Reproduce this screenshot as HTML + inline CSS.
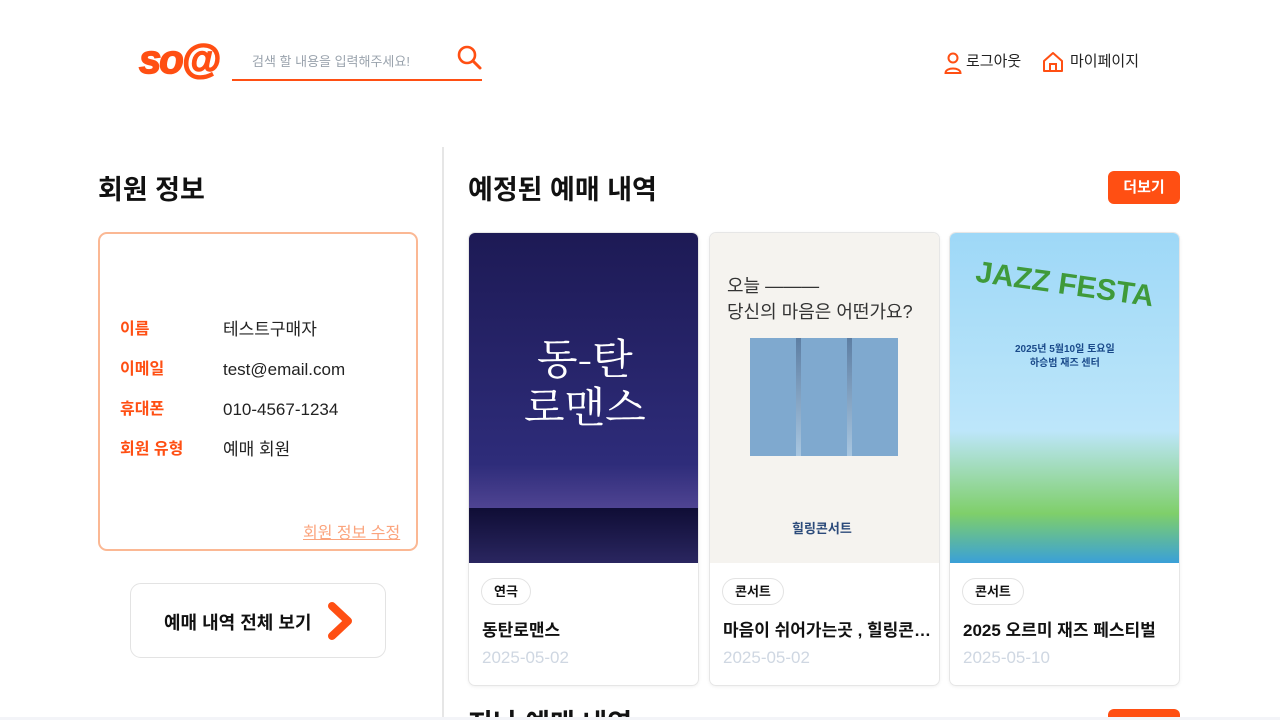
<!DOCTYPE html>
<html><head><meta charset="utf-8"><style>
*{margin:0;padding:0;box-sizing:border-box}
html,body{width:1280px;height:720px;overflow:hidden}
body{background:#fff;font-family:"Liberation Sans","Noto Sans CJK KR",sans-serif;color:#111;position:relative}
.a{position:absolute}
.logo{left:139px;top:36px;font-size:40px;font-weight:900;font-style:italic;color:#ff4f13;letter-spacing:-2px;line-height:48px;-webkit-text-stroke:1.5px #ff4f13}
.search{left:232px;top:40px;width:250px;height:41px;border-bottom:2px solid #ff4f13}
.search span{position:absolute;left:20px;top:11px;font-size:13px;color:#9aa3ad}
.nav{top:52px;font-size:15px;color:#222;line-height:20px}
h2{position:absolute;font-size:27px;font-weight:bold;line-height:32px}
.box{left:98px;top:232px;width:320px;height:319px;border:2px solid #fbb894;border-radius:9px}
.lab{left:120px;font-size:16px;font-weight:bold;color:#ff4f13;line-height:20px}
.val{left:223px;font-size:17px;color:#222;line-height:20px}
.btn{left:130px;top:583px;width:256px;height:75px;border:1px solid #e3e3e3;border-radius:11px}
.more{width:72px;height:33px;background:#ff4f13;border-radius:6px;color:#fff;font-weight:bold;font-size:15px;text-align:center;line-height:33px}
.card{top:232px;width:231px;height:454px;border:1px solid #e6e6e6;border-radius:7px;overflow:hidden;box-shadow:0 1px 3px rgba(0,0,0,.06)}
.img{height:330px;position:relative;overflow:hidden}
.tag{position:absolute;left:12px;top:345px;height:27px;padding:0 12px;border:1px solid #e3e3e3;border-radius:14px;font-size:13px;font-weight:bold;line-height:25px}
.tt{position:absolute;left:13px;top:388px;font-size:17px;font-weight:bold;white-space:nowrap;width:210px;overflow:hidden;text-overflow:ellipsis;line-height:20px}
.dt{position:absolute;left:13px;top:415px;font-size:17px;color:#cfd7e2;line-height:20px}
</style></head><body>
<div class="a logo">so@</div>
<div class="a search"><span>검색 할 내용을 입력해주세요!</span>
<svg class="a" style="left:225px;top:5px" width="26" height="26" viewBox="0 0 26 26"><circle cx="10" cy="10" r="8" fill="none" stroke="#ff4f13" stroke-width="2.6"/><path d="M16 16 L23 23" stroke="#ff4f13" stroke-width="3" stroke-linecap="round"/></svg></div>
<svg class="a" style="left:944px;top:52px" width="18" height="22" viewBox="0 0 18 22"><circle cx="9" cy="6" r="4.5" fill="none" stroke="#ff4f13" stroke-width="2"/><path d="M1.5 21 C1.5 15 16.5 15 16.5 21 Z" fill="none" stroke="#ff4f13" stroke-width="2"/></svg>
<div class="a nav" style="left:966px">로그아웃</div>
<svg class="a" style="left:1042px;top:51px" width="22" height="22" viewBox="0 0 22 22"><path d="M2 10 L11 2 L20 10 V20 H2 Z" fill="none" stroke="#ff4f13" stroke-width="2" stroke-linejoin="round"/><path d="M8 20 V13 H14 V20" fill="none" stroke="#ff4f13" stroke-width="2"/></svg>
<div class="a nav" style="left:1070px">마이페이지</div>
<div class="a" style="left:442px;top:147px;width:2px;height:573px;background:#e6e6e6"></div>
<h2 style="left:98px;top:174px">회원 정보</h2>
<div class="a box"></div>
<div class="a lab" style="top:320px">이름</div><div class="a val" style="top:320px">테스트구매자</div>
<div class="a lab" style="top:360px">이메일</div><div class="a val" style="top:360px">test@email.com</div>
<div class="a lab" style="top:400px">휴대폰</div><div class="a val" style="top:400px">010-4567-1234</div>
<div class="a lab" style="top:440px">회원 유형</div><div class="a val" style="top:440px">예매 회원</div>
<div class="a" style="left:303px;top:519px;font-size:16px;color:#fba47d;text-decoration:underline">회원 정보 수정</div>
<div class="a btn"><div class="a" style="left:33px;top:25px;font-size:18px;font-weight:bold">예매 내역 전체 보기</div>
<svg class="a" style="left:195px;top:17px" width="30" height="40" viewBox="0 0 30 40"><path d="M6 5 L22 20 L6 35" fill="none" stroke="#ff4f13" stroke-width="8" stroke-linecap="round" stroke-linejoin="round"/></svg></div>
<h2 style="left:468px;top:174px">예정된 예매 내역</h2>
<div class="a more" style="left:1108px;top:171px">더보기</div>
<div class="a card" style="left:468px"><div class="img" style="background:linear-gradient(#1d1a55,#2e2c7a 70%,#5a4c9a 88%,#1a1840)">
<div class="a" style="left:55px;top:100px;color:#fff;font-size:42px;font-family:'Noto Serif CJK SC',serif;line-height:48px;text-align:center">동-탄<br>로맨스</div>
<div class="a" style="left:0;bottom:0;width:231px;height:55px;background:linear-gradient(#0f0d35,#2a2660)"></div></div>
<div class="tag">연극</div><div class="tt">동탄로맨스</div><div class="dt">2025-05-02</div></div>
<div class="a card" style="left:709px"><div class="img" style="background:#f5f3ef">
<div class="a" style="left:17px;top:40px;font-size:18px;color:#333;line-height:26px">오늘 ———<br>당신의 마음은 어떤가요?</div>
<div class="a" style="left:40px;top:105px;width:148px;height:118px;background:repeating-linear-gradient(90deg,#7fa9cf 0 46px,transparent 46px 51px),linear-gradient(#5d7ea3,#a8c6e0)"></div>
<div class="a" style="left:82px;top:285px;font-size:13px;font-weight:bold;color:#2b4a7a">힐링콘서트</div></div>
<div class="tag">콘서트</div><div class="tt">마음이 쉬어가는곳 , 힐링콘서트</div><div class="dt">2025-05-02</div></div>
<div class="a card" style="left:949px"><div class="img" style="background:linear-gradient(#9ed8f7,#bde6fa 60%,#7fcf6a 85%,#3aa0d8)">
<div class="a" style="left:25px;top:35px;font-size:30px;font-weight:bold;color:#3f9a3a;transform:rotate(8deg)">JAZZ FESTA</div>
<div class="a" style="left:65px;top:110px;font-size:10px;font-weight:bold;color:#1a4a8a;text-align:center;line-height:14px">2025년 5월10일 토요일<br>하승범 재즈 센터</div></div>
<div class="tag">콘서트</div><div class="tt">2025 오르미 재즈 페스티벌</div><div class="dt">2025-05-10</div></div>
<h2 style="left:468px;top:708px">지난 예매 내역</h2>
<div class="a more" style="left:1108px;top:709px">더보기</div>
<div class="a" style="left:0;top:717px;width:1280px;height:3px;background:#f3f4f8;z-index:5"></div>
</body></html>
